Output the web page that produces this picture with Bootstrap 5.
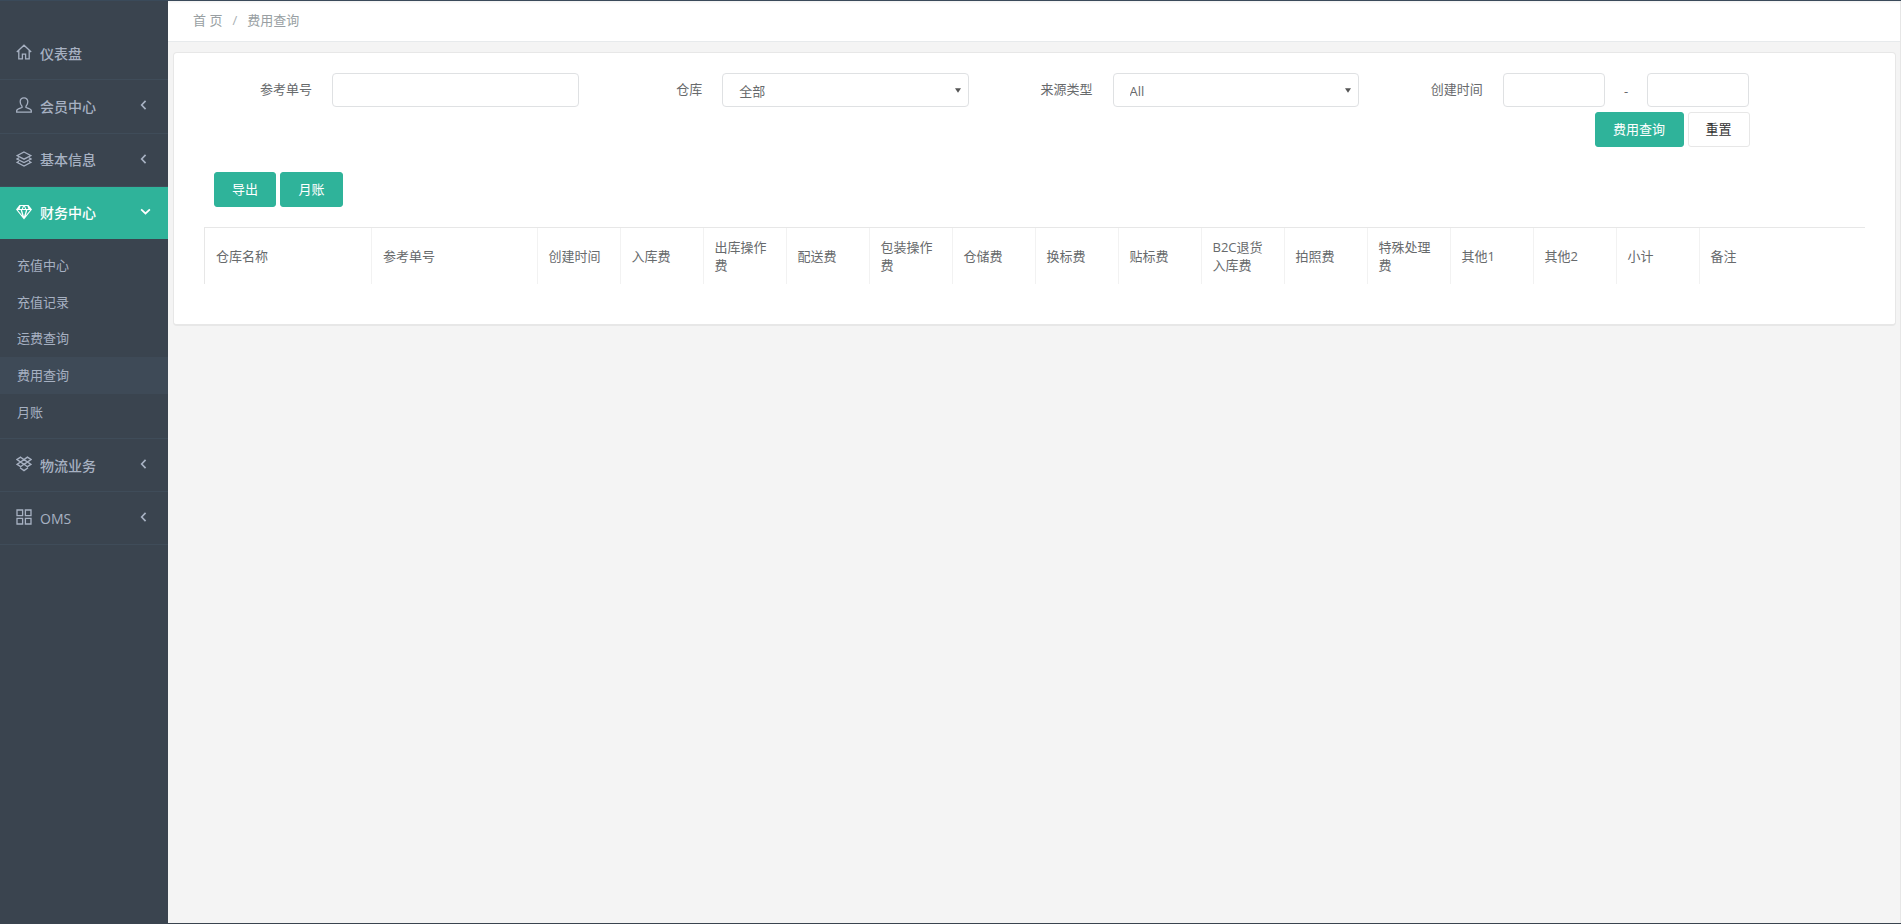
<!DOCTYPE html>
<html lang="zh-CN">
<head>
  <meta charset="UTF-8" />
  <meta name="viewport" content="width=device-width, initial-scale=1.0" />
  <title>费用查询</title>
  <link href="https://cdn.jsdelivr.net/npm/bootstrap@5.3.0/dist/css/bootstrap.min.css" rel="stylesheet" crossorigin="anonymous" />
  <style>
    html, body { height: 100%; }
    body {
      font-family: "Open Sans", "Noto Sans CJK SC", sans-serif;
      font-size: 13px;
      color: #676a6c;
      background: #f4f4f4;
      overflow: hidden;
    }
    .page-shell { height: 924px; border-top: 1px solid #3a4a5a; border-bottom: 1px solid #3a444f; }

    /* sidebar */
    .side-menu { width: 168px; flex: none; background: #3a444f; padding-top: 26px; }
    .side-item {
      height: 53.3px;
      padding: 0 16px;
      font-size: 14px;
      font-weight: 500;
      color: #a7b1c2;
      border-bottom: 1px solid #3f4c59;
      text-decoration: none;
    }
    .side-item.is-open { background: #2fb39a; color: #fff; border-bottom: 0; height: 52px; }
    .side-ico { width: 16px; height: 16px; margin: -2px 8px 0 0; flex: none; }
    .side-arrow { width: 7px; height: 10px; margin-left: auto; margin-right: 5px; margin-top: -2px; }
    .is-open .side-arrow { width: 11px; height: 7px; margin-right: 1px; }
    .side-sub { padding: 8px 0 7px; border-bottom: 1px solid #3f4c59; }
    .side-sub a {
      display: block;
      height: 36.8px;
      line-height: 36px;
      padding-left: 17px;
      color: #a7b1c2;
      text-decoration: none;
    }
    .side-sub a.is-current { background: #3e4a57; }

    /* top bar */
    .main-area { border-right: 1px solid #e6e6e6; }
    .crumb-bar {
      height: 41px;
      background: #fff;
      border-bottom: 1px solid #e7eaec;
      box-shadow: inset 0 3px 3px -2px rgba(0, 0, 0, .07);
      padding-left: 25px;
    }
    .crumb-bar .breadcrumb { --bs-breadcrumb-margin-bottom: 0; --bs-breadcrumb-item-padding-x: 10px; --bs-breadcrumb-divider-color: #a9afb3; }
    .crumb-bar .breadcrumb-item, .crumb-bar .breadcrumb-item.active { color: #999fa3; }

    /* panel */
    .fee-panel {
      margin: 10px 4px 0 5px;
      height: 274px;
      background: #fff;
      border: 1px solid #e7e7e7;
      border-bottom-width: 2px;
      border-radius: 4px;
      padding-top: 20px;
    }
    .filter-wrap { width: 1547.5px; margin-left: 28px; }
    .filter-grid { display: grid; grid-template-columns: repeat(4, 376.5px); column-gap: 13.75px; }
    .filter-label { width: 110px; margin-right: 20px; flex: none; text-align: right; line-height: 32px; }
    .filter-grid .form-control, .filter-grid .form-select {
      height: 34px;
      min-height: 34px;
      font-size: 13px;
      color: #676a6c;
      border-color: #dfe1e3;
      border-radius: 4px;
    }
    .filter-grid .date-input { width: 102.5px; flex: none; }
    .filter-grid .form-select {
      padding: 4px 24px 0 16px;
      background-image: url("data:image/svg+xml,%3Csvg xmlns='http://www.w3.org/2000/svg' viewBox='0 0 8 6'%3E%3Cpath fill='%23555' d='M0 0h8L4 6z'/%3E%3C/svg%3E");
      background-size: 6px 5px;
      background-position: right 7px center;
    }
    .date-dash { width: 41.5px; flex: none; text-align: center; padding-top: 4px; line-height: 28px; }
    .btn-teal, .btn-plain { height: 35px; font-size: 13px; border-radius: 3px; padding: 0; }
    .btn-teal { background: #2fb39a; border: 1px solid #2fb39a; color: #fff; width: 89px; }
    .btn-teal:hover { background: #2aa38c; color: #fff; }
    .btn-plain { background: #fff; border: 1px solid #e7e7e7; color: #333; width: 62px; }
    .filter-btns { margin-top: 5px; }
    .export-bar { margin: 25px 0 20px 40px; }
    .export-bar .btn-teal { width: 62px; }
    .export-bar .btn-teal + .btn-teal { width: 63px; }
    .table-frame { margin: 0 30px 0 30px; border-top: 1px solid #e7e7e7; }
    .fee-table { table-layout: fixed; width: 1578px; border-collapse: collapse; }
    .fee-table th {
      height: 56px;
      padding: 0 10px 0 11px;
      font-weight: 400;
      line-height: 18px;
      border-left: 1px solid #f2f2f2;
    }
    .fee-table th:first-child { border-left-color: #e7e7e7; }
    .col-name { width: 167px; }
    .col-ref { width: 165.5px; }
    .col-fee { width: 83px; }
  </style>
</head>
<body>
  <div class="page-shell d-flex">
    <nav class="side-menu">
      <a class="side-item d-flex align-items-center" href="#">
        <svg class="side-ico" viewBox="0 0 16 16" fill="none" stroke="currentColor" stroke-width="1.3"><path d="M.8 8 8 1.200 15.200 8M2.800 6.400v8.400h3.600v-4.600h3.200v4.600h3.600V6.400"/></svg>
        <span>仪表盘</span>
      </a>
      <a class="side-item d-flex align-items-center" href="#">
        <svg class="side-ico" viewBox="0 0 16 16" fill="none" stroke="currentColor" stroke-width="1.3"><path d="M8 .8c-2.400 0-3.800 1.700-3.800 4 0 2 .8 3.400 1.800 4.400v1.300c-1.600.8-5.300 1.200-5.300 3.200v1.400h14.600v-1.400c0-2-3.700-2.400-5.300-3.200V9.200c1-1 1.800-2.400 1.800-4.400C11.800 2.500 10.400.8 8 .8z"/></svg>
        <span>会员中心</span>
        <svg class="side-arrow" viewBox="0 0 8 12" fill="none" stroke="currentColor" stroke-width="2"><path d="M6.500 1 1.800 6l4.700 5"/></svg>
      </a>
      <a class="side-item d-flex align-items-center" href="#">
        <svg class="side-ico" viewBox="0 0 16 16" fill="none" stroke="currentColor" stroke-width="1.300"><path d="M8 1 15 4.600 8 8.200 1 4.600zM3 6.800 1 8l7 3.600L15 8l-2-1.200M3 10.200 1 11.400 8 15l7-3.600-2-1.200"/></svg>
        <span>基本信息</span>
        <svg class="side-arrow" viewBox="0 0 8 12" fill="none" stroke="currentColor" stroke-width="2"><path d="M6.500 1 1.800 6l4.700 5"/></svg>
      </a>
      <a class="side-item is-open d-flex align-items-center" href="#">
        <svg class="side-ico" viewBox="0 0 16 16" fill="currentColor"><path fill-rule="evenodd" d="M3.500 1h9L16 5.500 8 15.500 0 5.500zM4.600 2 3.600 5h2.200L7 2zM9 2l1.200 3h2.200l-1-3zM8 2.300 6.900 5h2.200zM1.800 6l4.400 5.500L4.700 6zM6 6l2 6.500L10 6zM11.300 6l-1.500 5.500L14.200 6z"/></svg>
        <span>财务中心</span>
        <svg class="side-arrow" viewBox="0 0 12 8" fill="none" stroke="currentColor" stroke-width="2"><path d="M1 1.500 6 6.200 11 1.500"/></svg>
      </a>
      <div class="side-sub">
        <a href="#">充值中心</a>
        <a href="#">充值记录</a>
        <a href="#">运费查询</a>
        <a class="is-current" href="#">费用查询</a>
        <a href="#">月账</a>
      </div>
      <a class="side-item d-flex align-items-center" href="#">
        <svg class="side-ico" viewBox="0 0 16 16" fill="none" stroke="currentColor" stroke-width="1.400"><path d="M4.600 1.200 8 3.600l3.400-2.400L15 3.500l-3.500 2.500L15 8.400l-3.600 2.300L8 8.300l-3.400 2.400L1 8.400 4.500 6 1 3.500zM4.500 6 8 3.600 11.500 6 8 8.300zM4 11.800l4 2.800 4-2.800"/></svg>
        <span>物流业务</span>
        <svg class="side-arrow" viewBox="0 0 8 12" fill="none" stroke="currentColor" stroke-width="2"><path d="M6.500 1 1.800 6l4.700 5"/></svg>
      </a>
      <a class="side-item d-flex align-items-center" href="#">
        <svg class="side-ico" viewBox="0 0 16 16" fill="none" stroke="currentColor" stroke-width="1.300"><path d="M1 1h5.600v5.600H1zM9.400 1H15v5.600H9.400zM1 9.400h5.600V15H1zM9.400 9.400H15V15H9.400z"/></svg>
        <span>OMS</span>
        <svg class="side-arrow" viewBox="0 0 8 12" fill="none" stroke="currentColor" stroke-width="2"><path d="M6.500 1 1.800 6l4.700 5"/></svg>
      </a>
    </nav>

    <main class="main-area flex-grow-1">
      <div class="crumb-bar d-flex align-items-center">
        <ol class="breadcrumb">
          <li class="breadcrumb-item">首 页</li>
          <li class="breadcrumb-item active">费用查询</li>
        </ol>
      </div>

      <section class="fee-panel">
        <form class="filter-wrap">
          <div class="filter-grid">
            <div class="d-flex">
              <label class="filter-label">参考单号</label>
              <input class="form-control" type="text" />
            </div>
            <div class="d-flex">
              <label class="filter-label">仓库</label>
              <select class="form-select"><option>全部</option></select>
            </div>
            <div class="d-flex">
              <label class="filter-label">来源类型</label>
              <select class="form-select"><option>All</option></select>
            </div>
            <div class="d-flex">
              <label class="filter-label">创建时间</label>
              <input class="form-control date-input" type="text" />
              <span class="date-dash">-</span>
              <input class="form-control date-input" type="text" />
            </div>
          </div>
          <div class="filter-btns d-flex justify-content-end gap-1">
            <button type="button" class="btn btn-teal">费用查询</button>
            <button type="reset" class="btn btn-plain">重置</button>
          </div>
        </form>

        <div class="export-bar d-flex gap-1">
          <button type="button" class="btn btn-teal">导出</button>
          <button type="button" class="btn btn-teal">月账</button>
        </div>

        <div class="table-frame">
          <table class="fee-table">
            <colgroup>
              <col class="col-name" /><col class="col-ref" />
              <col class="col-fee" /><col class="col-fee" /><col class="col-fee" /><col class="col-fee" />
              <col class="col-fee" /><col class="col-fee" /><col class="col-fee" /><col class="col-fee" />
              <col class="col-fee" /><col class="col-fee" /><col class="col-fee" /><col class="col-fee" />
              <col class="col-fee" /><col class="col-fee" /><col class="col-fee" />
            </colgroup>
            <thead>
              <tr>
                <th>仓库名称</th><th>参考单号</th><th>创建时间</th><th>入库费</th><th>出库操作费</th><th>配送费</th>
                <th>包装操作费</th><th>仓储费</th><th>换标费</th><th>贴标费</th><th>B2C退货入库费</th><th>拍照费</th>
                <th>特殊处理费</th><th>其他1</th><th>其他2</th><th>小计</th><th>备注</th>
              </tr>
            </thead>
          </table>
        </div>
      </section>
    </main>
  </div>
  <script src="https://cdn.jsdelivr.net/npm/bootstrap@5.3.0/dist/js/bootstrap.bundle.min.js" crossorigin="anonymous"></script>
</body>
</html>
